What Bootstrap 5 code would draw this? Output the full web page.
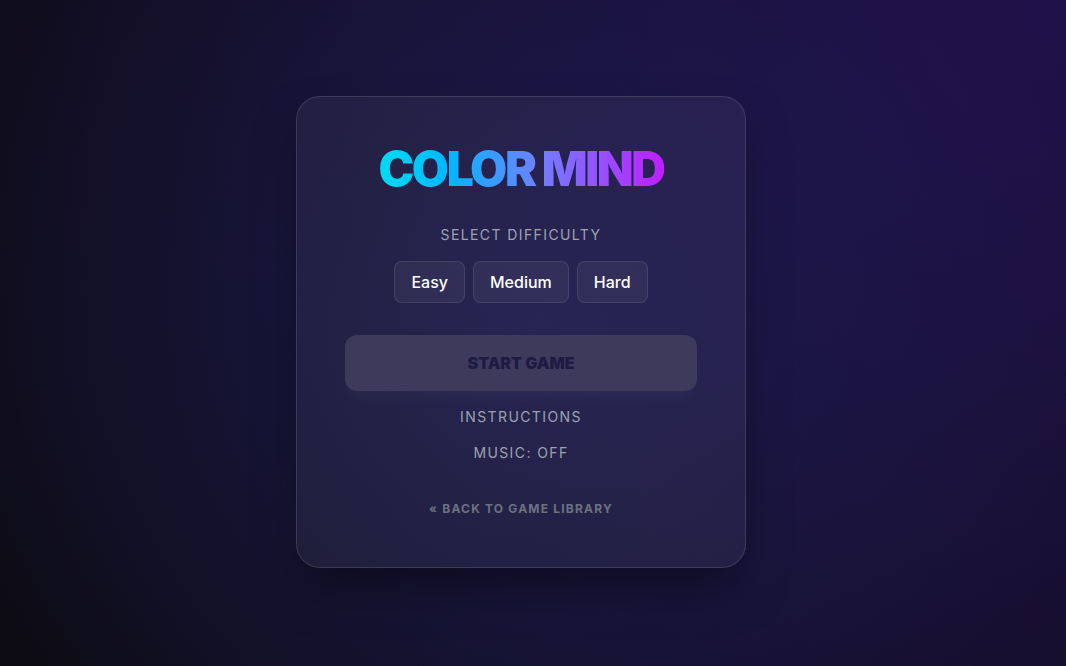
<!DOCTYPE html>
<html lang="en">
<head>
<meta charset="utf-8">
<meta name="viewport" content="width=device-width, initial-scale=1">
<title>Color Mind</title>
<link href="https://cdn.jsdelivr.net/npm/bootstrap@5.3.0/dist/css/bootstrap.min.css" rel="stylesheet">
<style>
  body {
    font-family: Inter, "Liberation Sans", sans-serif;
    color: #fff;
    background:
      radial-gradient(circle at 50% 50%, rgba(36, 44, 116, .4), rgba(36, 44, 116, 0)),
      radial-gradient(circle at 100% 0%, rgba(36, 18, 84, .86), rgba(36, 18, 84, 0)),
      #0c0b12;
  }
  .game-stage { padding-right: 24px; padding-bottom: 2px; }
  .menu-panel {
    width: 100%;
    max-width: 450px;
    padding: 48px;
    border: 1px solid rgba(255, 255, 255, .12);
    border-radius: 24px;
    background: rgba(255, 255, 255, .05);
    box-shadow: 0 25px 50px -12px rgba(0, 0, 0, .5);
  }
  .game-title {
    font-size: 48px;
    line-height: 48px;
    font-weight: 900;
    letter-spacing: -.05em;
    margin: 0 0 32px;
    background: linear-gradient(90deg, #00dbf2, #00b8ff 24%, #6f80ff 56%, #bd1fff);
    -webkit-background-clip: text;
    background-clip: text;
    color: transparent;
  }
  .menu-text {
    font-size: 14px;
    line-height: 20px;
    letter-spacing: .1em;
    color: #9ca3af;
    font-weight: 400;
  }
  .btn-level {
    --bs-btn-padding-x: 16px;
    --bs-btn-padding-y: 8px;
    --bs-btn-font-weight: 500;
    --bs-btn-color: #fff;
    --bs-btn-hover-color: #fff;
    --bs-btn-border-color: rgba(255, 255, 255, .1);
    --bs-btn-bg: rgba(255, 255, 255, .05);
    --bs-btn-border-radius: 8px;
    line-height: 24px;
  }
  .btn-start {
    --bs-btn-padding-y: 16px;
    --bs-btn-font-weight: 900;
    --bs-btn-border-width: 0;
    --bs-btn-border-radius: 12px;
    --bs-btn-disabled-color: #1e1a42;
    --bs-btn-disabled-bg: #3e3a5b;
    --bs-btn-disabled-opacity: 1;
    line-height: 24px;
    margin: 32px 0 16px;
    box-shadow: 0 10px 15px -3px rgba(255, 255, 255, .03);
  }
  .back-link {
    font-size: 12px;
    line-height: 20px;
    font-weight: 700;
    letter-spacing: .1em;
    color: #6b7280;
    margin-top: 36px;
  }
</style>
</head>
<body>
<main class="game-stage min-vh-100 d-flex align-items-center justify-content-center">
  <section class="menu-panel d-flex flex-column align-items-center text-center">
    <h1 class="game-title">COLOR MIND</h1>
    <h2 class="menu-text mb-3" id="difficulty">SELECT DIFFICULTY</h2>
    <div class="d-flex justify-content-center gap-2" role="group" aria-labelledby="difficulty">
      <button type="button" class="btn btn-level">Easy</button>
      <button type="button" class="btn btn-level">Medium</button>
      <button type="button" class="btn btn-level">Hard</button>
    </div>
    <button type="button" class="btn btn-start w-100" disabled>START GAME</button>
    <button type="button" class="btn menu-text border-0 p-0 mb-3">INSTRUCTIONS</button>
    <button type="button" class="btn menu-text border-0 p-0">MUSIC: OFF</button>
    <a href="#" class="back-link text-decoration-none">« BACK TO GAME LIBRARY</a>
  </section>
</main>
<script src="https://cdn.jsdelivr.net/npm/bootstrap@5.3.0/dist/js/bootstrap.bundle.min.js"></script>
</body>
</html>
